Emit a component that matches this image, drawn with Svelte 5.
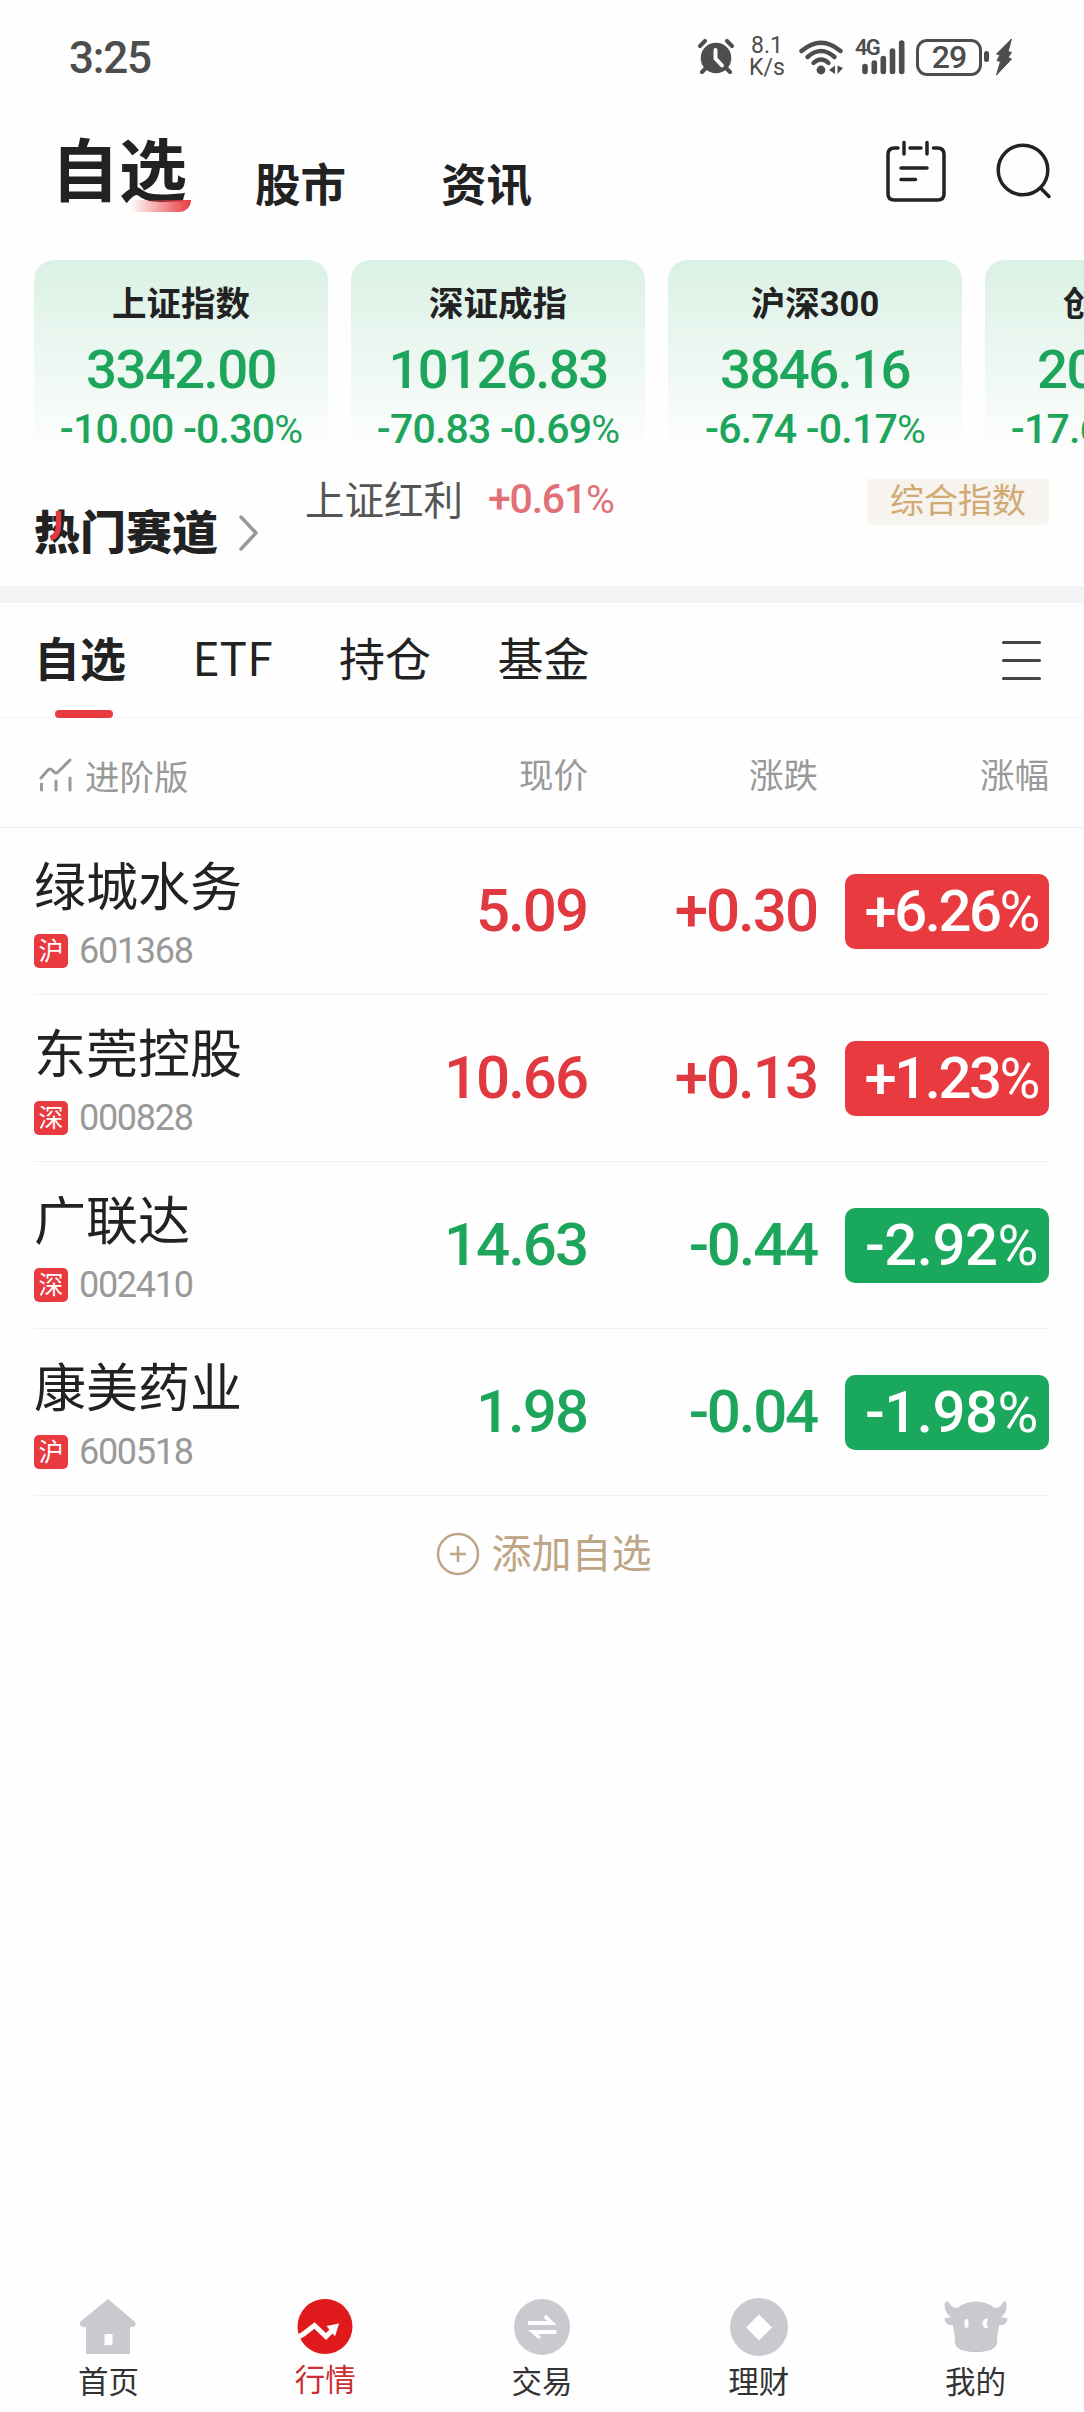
<script lang="ts">
	/**
	 * Watchlist - mobile quotes page
	 *
	 * Status bar, index cards, hot-track ticker, watchlist table and bottom nav.
	 */

	interface IndexCard {
		name: string;
		value: string;
		change: string;
		percent: string;
	}

	interface Stock {
		name: string;
		code: string;
		market: string;
		price: string;
		change: string;
		percent: string;
	}

	// ============================================================================
	// STATE
	// ============================================================================

	let activeTab = $state<string>('自选');
	let activeNav = $state<string>('行情');

	const tabs = ['自选', 'ETF', '持仓', '基金'];
	const navItems = ['首页', '行情', '交易', '理财', '我的'];

	const indices: IndexCard[] = [
		{ name: '上证指数', value: '3342.00', change: '-10.00', percent: '-0.30' },
		{ name: '深证成指', value: '10126.83', change: '-70.83', percent: '-0.69' },
		{ name: '沪深300', value: '3846.16', change: '-6.74', percent: '-0.17' },
		{ name: '创业板指', value: '2011.77', change: '-17.67', percent: '-0.87' }
	];

	const stocks: Stock[] = [
		{ name: '绿城水务', code: '601368', market: '沪', price: '5.09', change: '+0.30', percent: '+6.26' },
		{ name: '东莞控股', code: '000828', market: '深', price: '10.66', change: '+0.13', percent: '+1.23' },
		{ name: '广联达', code: '002410', market: '深', price: '14.63', change: '-0.44', percent: '-2.92' },
		{ name: '康美药业', code: '600518', market: '沪', price: '1.98', change: '-0.04', percent: '-1.98' }
	];
</script>

<div class="page">
	<div class="status-bar">
		<span class="clock">3:25</span>
		<div class="status-icons">
			<svg class="alarm" width="36" height="36" viewBox="0 0 36 36">
				<circle cx="18" cy="19" r="15.3" fill="#4d4d4d" />
				<path d="M2 7l5-5M34 7l-5-5M8 29l-4 4M28 29l4 4" stroke="#4d4d4d" stroke-width="4" stroke-linecap="round" />
				<path d="M17.5 11v8.5l6.5 7" fill="none" stroke="#fefefe" stroke-width="4" stroke-linecap="round" />
			</svg>
			<div class="speed"><span>8.1</span><span>K/s</span></div>
			<svg class="wifi" width="44" height="36" viewBox="0 0 44 36">
				<g fill="none" stroke="#4d4d4d" stroke-width="4.4" stroke-linecap="round">
					<path d="M2.5 12Q22-4.5 41.5 12" />
					<path d="M8.5 18Q22 6 35.5 18" />
					<path d="M14.5 24Q22 17 29.5 24" />
				</g>
				<circle cx="22" cy="31" r="4.4" fill="#4d4d4d" />
				<path d="M36 26.5v8.5l-6-4zM38.5 26.5v8.5l5.5-6z" fill="#4d4d4d" />
			</svg>
			<div class="signal">
				<span class="net">4G</span>
				<svg width="50" height="36" viewBox="0 0 50 36">
					<path d="M10 27.5v5M19.3 24v8.5M28.3 19.5v13M37.5 12v20.5M46.7 4v28.5" stroke="#4d4d4d" stroke-width="5.6" stroke-linecap="round" />
				</svg>
			</div>
			<div class="battery">29</div>
			<svg class="bolt" width="30" height="38" viewBox="0 0 30 38">
				<rect x="0" y="13" width="5" height="11" rx="2.5" fill="#4d4d4d" />
				<path d="M27.5 1L12.5 16l3.5 1-3 5.5 3.5 1L12.5 37 27.5 21l-3.5-1.5 3.5-5-3.5-1z" fill="#4d4d4d" stroke="#4d4d4d" stroke-linejoin="round" />
			</svg>
		</div>
	</div>

	<header class="header">
		<h1>自选<i class="swoosh"></i></h1>
		<span class="section-link">股市</span>
		<span class="section-link">资讯</span>
		<div class="header-icons">
			<svg width="60" height="62" viewBox="0 0 60 62">
				<g fill="none" stroke="#222" stroke-width="3.5" stroke-linecap="round">
					<path d="M12 8H8.5Q2 8 2 14.5V54Q2 60 8.5 60H51.5Q58 60 58 54V14.5Q58 8 51.5 8H47.5M24 8H35" />
					<path d="M18 2.5V14M41 2.5V14" />
					<path d="M15 28H41M15 39.6H29.5" />
				</g>
			</svg>
			<svg width="56" height="56" viewBox="0 0 56 56">
				<g fill="none" stroke="#222" stroke-width="3.5" stroke-linecap="round">
					<circle cx="27" cy="27" r="24.8" />
					<path d="M44.5 45L53 53.5" />
				</g>
			</svg>
		</div>
	</header>

	<div class="cards">
		{#each indices as item (item.name)}
			<div class="card">
				<div class="card-name">{item.name}</div>
				<div class="card-value">{item.value}</div>
				<div class="card-change">{item.change} {item.percent}<span class="pct">%</span></div>
			</div>
		{/each}
	</div>

	<div class="hot">
		<div class="hot-title">
			热门赛道
			<svg class="hot-stroke" width="14" height="34" viewBox="0 0 14 34">
				<path d="M9.5 1V15Q9.5 26 1.5 28.5" fill="none" stroke="#e3393e" stroke-width="5.5" />
			</svg>
		</div>
		<svg class="hot-arrow" width="20" height="38" viewBox="0 0 20 38">
			<path d="M2 3L17 19 2 35" fill="none" stroke="#999" stroke-width="3.5" stroke-linecap="round" stroke-linejoin="round" />
		</svg>
		<div class="hot-ticker">
			<span class="hot-name">上证红利</span>
			<span class="hot-change">+0.61<span class="pct">%</span></span>
			<span class="hot-tag">综合指数</span>
		</div>
	</div>

	<nav class="tabs">
		{#each tabs as tab (tab)}
			<button class="tab" class:active={tab === activeTab} onclick={() => (activeTab = tab)}>{tab}</button>
		{/each}
		<div class="menu"><i></i><i></i><i></i></div>
	</nav>

	<div class="row head">
		<div class="advanced">
			<svg width="34" height="36" viewBox="0 0 34 36">
				<path d="M2 21L9 13Q11 11 13 13L15 15Q17 17 19 15L31 3M2.5 27V33M17 24V33M31 21V33" fill="none" stroke="#999" stroke-width="3" stroke-linecap="round" />
			</svg>
			<span>进阶版</span>
		</div>
		<span>现价</span>
		<span>涨跌</span>
		<span>涨幅</span>
	</div>

	<div class="list">
		{#each stocks as stock (stock.code)}
			<div class="row stock" class:down={stock.change.startsWith('-')}>
				<div class="info">
					<div class="name">{stock.name}</div>
					<div class="meta"><span class="market">{stock.market}</span><span class="code">{stock.code}</span></div>
				</div>
				<div class="num">{stock.price}</div>
				<div class="num delta">{stock.change}</div>
				<div class="pill">{stock.percent}<span class="pct">%</span></div>
			</div>
		{/each}
	</div>

	<div class="add">
		<svg width="44" height="44" viewBox="0 0 44 44">
			<circle cx="22" cy="22" r="20" fill="none" stroke="#bda585" stroke-width="2.5" />
			<path d="M14 22H30M22 14V30" stroke="#bda585" stroke-width="2.5" />
		</svg>
		<span>添加自选</span>
	</div>

	<nav class="bottom-nav">
		{#each navItems as item, i (item)}
			<button class="nav-item" class:active={item === activeNav} onclick={() => (activeNav = item)}>
				<svg width="64" height="60" viewBox="0 0 64 60">
					{#if i === 0}
						<path fill-rule="evenodd" d="M32 2L59 25Q61 29 57 30H54V57H10V30H7Q3 29 4 25ZM28.5 37V48H36.5V37Z" fill="#c9cad0" />
					{:else if i === 1}
						<circle cx="32" cy="29.5" r="27.5" fill="#e0191d" />
						<path d="M4 40Q8 39 10.5 37L21.5 28.5 33 39.5 41 31.5" fill="none" stroke="#fefefe" stroke-width="5" />
						<path d="M33.5 29L46 26.5 42 39.5Z" fill="#fefefe" />
					{:else if i === 2}
						<circle cx="32" cy="30" r="28" fill="#c9cad0" />
						<path d="M18 28V24H37.5L33.5 20.5 36 17.5 46.5 28ZM46.5 33V37H28.5L31 40.5 28.5 42 18 33Z" fill="#fefefe" />
					{:else if i === 3}
						<circle cx="32" cy="30" r="29" fill="#c9cad0" />
						<path d="M32 17.5L45 30.5 32 43.5 19 30.5Z" fill="#fefefe" />
					{:else}
						<path
							d="M1 5Q4 3 6 7Q8 11 13 11Q21 4.500 32 4.500T51 11Q56 11 58 7Q60 3 62 5Q64 15 57 20L63.500 21.500Q63 29 55 28L53 41Q56 55 32 55T11 41L9 28Q1 29 .500 21.500L7 20Q-1 15 1 5Z"
							fill="#c9cad0"
						/>
						<rect x="20.5" y="22" width="4" height="9" rx="2" fill="#fefefe" />
						<path d="M43.5 22Q39 22 39 26.5T43.5 31Q41 26.5 43.5 22" fill="#fefefe" stroke="#fefefe" />
					{/if}
				</svg>
				<span>{item}</span>
			</button>
		{/each}
	</nav>
</div>

<style>
	:global(body) {
		background: #fefefe;
	}

	.page {
		display: flex;
		flex-direction: column;
		width: 1084px;
		height: 2412px;
		overflow: hidden;
		background: #fefefe;
		color: #222;
		font-family: 'Noto Sans CJK SC', sans-serif;
	}

	button {
		padding: 0;
		border: 0;
		background: none;
		color: inherit;
		font: inherit;
	}

	svg {
		display: block;
		flex: none;
	}

	.pct {
		font-size: 0.96em;
		font-weight: 400;
	}

	/* Status bar */
	.status-bar {
		display: flex;
		justify-content: space-between;
		align-items: center;
		height: 114px;
		padding: 0 70px 0 69px;
		box-sizing: border-box;
		color: #4d4d4d;
		font-family: Roboto, sans-serif;
	}

	.clock {
		padding-top: 1px;
		font-size: 44px;
		font-weight: 500;
		letter-spacing: -1.2px;
	}

	.status-icons {
		display: flex;
		align-items: center;
		height: 44px;
	}

	.speed {
		display: flex;
		flex-direction: column;
		align-items: center;
		width: 36px;
		margin: 0 14px 0 15px;
		font-size: 23px;
		line-height: 22px;
	}

	.signal {
		display: flex;
		position: relative;
		margin: 0 11px 0 12px;
	}

	.net {
		position: absolute;
		top: -4px;
		left: 0;
		font-size: 22px;
		font-weight: 600;
		line-height: 26px;
		letter-spacing: -1.8px;
	}

	.battery {
		width: 66px;
		height: 37px;
		margin-right: 2px;
		border: 3px solid #4d4d4d;
		border-radius: 11px;
		box-sizing: border-box;
		font-size: 32px;
		font-weight: 500;
		line-height: 30px;
		letter-spacing: -1px;
		text-align: center;
	}

	/* Header */
	.header {
		display: flex;
		align-items: flex-end;
		height: 100px;
		padding: 0 32px 0 51px;
	}

	h1 {
		position: relative;
		margin: 0 68px 2px 0;
		font-size: 68px;
		font-weight: 700;
		line-height: 90px;
	}

	.swoosh {
		position: absolute;
		left: 79px;
		bottom: 0;
		width: 61px;
		height: 12px;
		border-radius: 0 0 14px 0;
		background: linear-gradient(90deg, rgba(232, 58, 63, 0), #e83a3f);
	}

	.section-link {
		margin-right: 95px;
		font-size: 45.5px;
		font-weight: 700;
		line-height: 64px;
	}

	.header-icons {
		display: flex;
		align-items: center;
		gap: 50px;
		margin: 0 0 12px auto;
	}

	/* Index cards */
	.cards {
		display: flex;
		gap: 23px;
		height: 206px;
		padding: 46px 0 0 34px;
	}

	.card {
		flex: none;
		width: 294px;
		height: 196px;
		border-radius: 20px 20px 0 0;
		background: linear-gradient(#daf1e5, #e9f6ef 40%, #fefefe);
		color: #1ea55c;
		font-family: Roboto, 'Noto Sans CJK SC', sans-serif;
		text-align: center;
		white-space: nowrap;
	}

	.card-name {
		padding-top: 24px;
		color: #222;
		font-size: 34.5px;
		font-weight: 700;
		line-height: 40px;
	}

	.card-value {
		margin-top: 14px;
		font-size: 54.5px;
		font-weight: 500;
		line-height: 62px;
		letter-spacing: -1.6px;
	}

	.card-change {
		margin-top: 7px;
		font-size: 41px;
		font-weight: 500;
		line-height: 44px;
		letter-spacing: -0.8px;
	}

	/* Hot track ticker */
	.hot {
		display: flex;
		height: 120px;
		padding: 0 35px 0 34px;
		border-bottom: 17px solid #f1f3f5;
	}

	.hot-title {
		position: relative;
		width: 184px;
		padding-top: 31px;
		font-size: 46px;
		font-weight: 900;
		line-height: 64px;
	}

	.hot-stroke {
		position: absolute;
		top: 44px;
		left: 15px;
	}

	.hot-arrow {
		margin: 48px 0 0 21px;
	}

	.hot-ticker {
		display: flex;
		flex: 1;
		align-items: flex-start;
		padding-top: 13px;
	}

	.hot-name {
		margin-left: 46px;
		color: #555;
		font-size: 39.5px;
		line-height: 37px;
	}

	.hot-change {
		margin-left: 25px;
		color: #e27076;
		font-family: Roboto, sans-serif;
		font-size: 41px;
		font-weight: 500;
		line-height: 41px;
		letter-spacing: -1.2px;
	}

	.hot-tag {
		width: 182px;
		height: 46px;
		margin-left: auto;
		border-radius: 0 0 6px 6px;
		background: #f7f3ee;
		color: #d0aa72;
		font-size: 34px;
		line-height: 40px;
		text-align: center;
	}

	/* Tabs */
	.tabs {
		display: flex;
		height: 114px;
		padding: 0 43px 0 34px;
		border-bottom: 1px solid #f4f4f4;
		font-size: 46px;
		line-height: 107px;
	}

	.tab {
		display: flex;
		position: relative;
		margin-right: 66.5px;
	}

	.tab.active {
		font-weight: 700;
	}

	.tab.active::after {
		content: '';
		position: absolute;
		left: 21px;
		bottom: -1px;
		width: 58px;
		height: 8px;
		border-radius: 4px;
		background: #e83a3f;
	}

	.menu {
		display: flex;
		flex-direction: column;
		gap: 15px;
		margin: 38px 0 0 auto;
	}

	.menu i {
		width: 39px;
		height: 3px;
		border-radius: 2px;
		background: #444;
	}

	/* Table */
	.row {
		display: grid;
		grid-template-columns: 1fr 250px 230px 231px;
		align-items: center;
	}

	.head {
		height: 109px;
		padding: 0 35px 0 39px;
		border-bottom: 1px solid #f0f0f0;
		color: #999;
		font-size: 34.5px;
		line-height: 50px;
		text-align: right;
	}

	.advanced {
		display: flex;
		align-items: center;
		gap: 12px;
		padding-top: 4px;
	}

	.list {
		padding: 0 35px 0 34px;
	}

	.stock {
		height: 166px;
		border-bottom: 1px solid #f0f0f0;
		color: #e03a40;
	}

	.stock.down {
		color: #1ea55c;
	}

	.info {
		padding-top: 1px;
	}

	.name {
		color: #222;
		font-size: 52px;
		line-height: 64px;
		white-space: nowrap;
	}

	.meta {
		display: flex;
		align-items: center;
		gap: 11px;
		margin-top: 15px;
	}

	.market {
		width: 34px;
		height: 34px;
		border-radius: 5px;
		background: #e83a3f;
		color: #fff;
		font-size: 25px;
		line-height: 31px;
		text-align: center;
	}

	.code {
		color: #999;
		font-family: Roboto, sans-serif;
		font-size: 36px;
		line-height: 40px;
		letter-spacing: -1.3px;
	}

	.num {
		padding-right: 1px;
		font-family: Roboto, sans-serif;
		font-size: 60px;
		font-weight: 500;
		line-height: 74px;
		letter-spacing: -2px;
		text-align: right;
	}

	.down .delta {
		letter-spacing: -2.2px;
	}

	.pill {
		justify-self: end;
		width: 204px;
		height: 75px;
		padding-right: 11px;
		border-radius: 10px;
		box-sizing: border-box;
		background: #e83a3f;
		color: #fff;
		font-family: Roboto, sans-serif;
		font-size: 58px;
		font-weight: 500;
		line-height: 75px;
		letter-spacing: -2.4px;
		text-align: right;
	}

	.down .pill {
		background: #1aa85c;
		letter-spacing: -0.4px;
	}

	.add {
		display: flex;
		justify-content: center;
		align-items: center;
		gap: 12px;
		height: 116px;
		padding-left: 3px;
		color: #bda585;
		font-size: 40px;
		line-height: 60px;
	}

	.add span {
		padding-bottom: 6px;
	}

	/* Bottom nav */
	.bottom-nav {
		display: flex;
		height: 115px;
		margin-top: auto;
	}

	.nav-item {
		display: flex;
		flex: 1;
		flex-direction: column;
		align-items: center;
		color: #333;
		font-size: 30.5px;
		line-height: 46px;
	}

	.nav-item.active {
		color: #c9302f;
		line-height: 42px;
	}
</style>
